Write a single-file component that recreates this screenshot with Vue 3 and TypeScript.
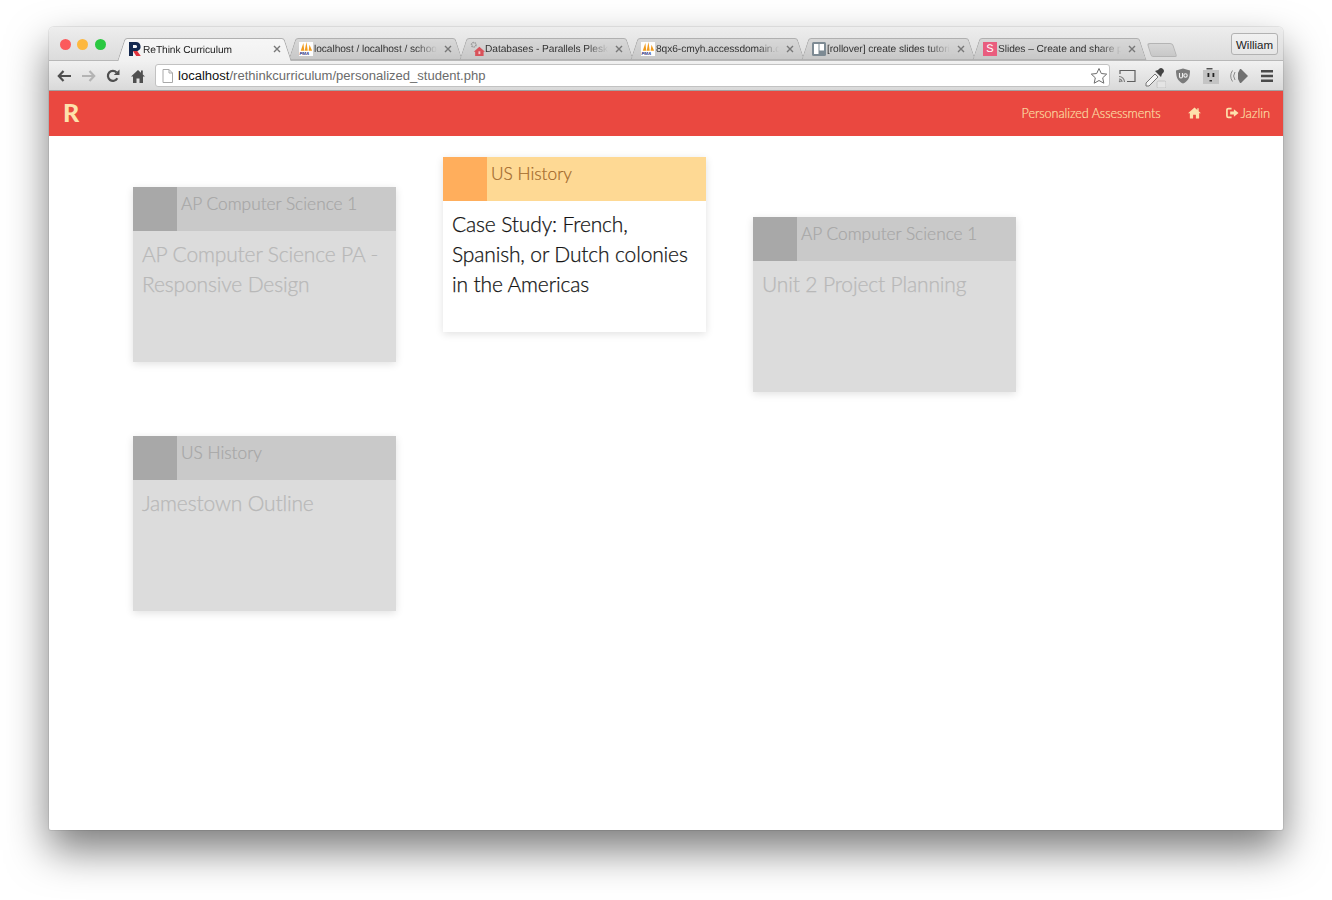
<script setup lang="ts">
interface Tab {
  title: string
  icon: 'rethink' | 'pma' | 'plesk' | 'trello' | 'slides'
  active?: boolean
}
interface Card {
  course: string
  title: string
  active?: boolean
}
interface Column {
  name: string
  cards: Card[]
}

const tabs: Tab[] = [
  { title: 'ReThink Curriculum', icon: 'rethink', active: true },
  { title: 'localhost / localhost / schoo', icon: 'pma' },
  { title: 'Databases - Parallels Plesk', icon: 'plesk' },
  { title: '8qx6-cmyh.accessdomain.c', icon: 'pma' },
  { title: '[rollover] create slides tutori', icon: 'trello' },
  { title: 'Slides – Create and share pr', icon: 'slides' },
]

const columns: Column[] = [
  {
    name: 'col-one',
    cards: [
      { course: 'AP Computer Science 1', title: 'AP Computer Science PA - Responsive Design' },
      { course: 'US History', title: 'Jamestown Outline' },
    ],
  },
  {
    name: 'col-two',
    cards: [
      { course: 'US History', title: 'Case Study: French, Spanish, or Dutch colonies in the Americas', active: true },
    ],
  },
  {
    name: 'col-three',
    cards: [{ course: 'AP Computer Science 1', title: 'Unit 2 Project Planning' }],
  },
]
</script>

<template>
  <div class="stage">
    <div class="window">
      <div class="titlebar">
        <div class="lights">
          <span class="light red"></span>
          <span class="light yellow"></span>
          <span class="light green"></span>
        </div>
        <div class="tabs">
          <div v-for="tab in tabs" :key="tab.title + tab.icon" class="tab" :class="{ active: tab.active }">
            <span class="favicon">
              <svg v-if="tab.icon === 'rethink'" viewBox="0 0 14 16" width="14" height="16">
                <path fill="#14284f" fill-rule="evenodd" d="M1 1h7a4.6 4.6 0 0 1 1.6 8.9L5 10v5H1zM5 4v3h2.6a1.5 1.5 0 0 0 0-3z" />
                <path fill="#e0323c" d="M5 10h4.2l3.6 5H8.200z" />
              </svg>
              <svg v-else-if="tab.icon === 'pma'" viewBox="0 0 16 16" width="14" height="14">
                <rect width="16" height="16" fill="#fdfdfd" />
                <path fill="#f29b1d" d="M2 10 5 1l1 9zM6.500 10 8.500 0l1.500 10zM11 10l1-7 3 7z" />
                <text x="0.500" y="14.500" class="pma-label">PMA</text>
              </svg>
              <svg v-else-if="tab.icon === 'plesk'" viewBox="0 0 16 16" width="15" height="15">
                <circle cx="4" cy="4" r="2.400" fill="none" stroke="#9a9a9a" stroke-width="1.600" stroke-dasharray="1.500 .7" />
                <path fill="#d8525a" d="M4 11.500 10 6l6 5.500h-1.500V16h-9v-4.500z" />
                <rect x="9" y="11" width="2" height="3" fill="#f3c3c5" />
              </svg>
              <svg v-else-if="tab.icon === 'trello'" viewBox="0 0 14 14" width="14" height="14">
                <rect width="14" height="14" rx="1.500" fill="#7d8a93" />
                <rect x="2" y="2" width="4.500" height="10" fill="#fff" />
                <rect x="7.500" y="2" width="4.500" height="6.500" fill="#fff" />
              </svg>
              <span v-else class="slides-icon">S</span>
            </span>
            <span class="tab-title">{{ tab.title }}</span>
            <svg class="tab-close" viewBox="0 0 8 8" width="8" height="8">
              <path d="M1 1l6 6M7 1 1 7" stroke="#777" stroke-width="1.400" fill="none" />
            </svg>
          </div>
          <div class="new-tab"></div>
        </div>
        <button class="profile" type="button">William</button>
      </div>

      <div class="toolbar">
        <div class="nav-buttons">
          <span class="tool">
            <svg viewBox="0 0 14 12" width="14" height="12"><path d="M6.500 1 1.800 6l4.700 5M2 6h12" fill="none" stroke="#4f4f4f" stroke-width="2.200" /></svg>
          </span>
          <span class="tool">
            <svg viewBox="0 0 14 12" width="14" height="12"><path d="M7.500 1 12.200 6l-4.700 5M12 6H0" fill="none" stroke="#b4b4b4" stroke-width="2.200" /></svg>
          </span>
          <span class="tool">
            <svg viewBox="0 0 14 14" width="14" height="14"><path d="M11.300 9.300A5 5 0 1 1 10.600 3.500" fill="none" stroke="#4f4f4f" stroke-width="2.200" /><path d="M7.800 6H13.500V.5z" fill="#4f4f4f" /></svg>
          </span>
          <span class="tool">
            <svg viewBox="0 0 14 14" width="14" height="14"><path fill="#4f4f4f" d="M7 1 0 7.500h2V14h3.500V9.500h3V14H12V7.500h2L11.800 5.400V1.500H10V3.700z" /></svg>
          </span>
        </div>
        <div class="omnibox">
          <svg class="page-icon" viewBox="0 0 11 14" width="11" height="14"><path d="M1 .5h6l3.500 3.500v9.500H1zM7 .5V4h3.500" fill="#fff" stroke="#a8a8a8" /></svg>
          <span class="url"><span class="host">localhost</span>/rethinkcurriculum/personalized_student.php</span>
          <svg class="star" viewBox="0 0 18 18" width="18" height="18"><path d="M9 1.500l2.300 5 5.400.6-4 3.700 1.100 5.400L9 13.500l-4.800 2.700 1.100-5.400-4-3.700 5.400-.6z" fill="#fff" stroke="#6d6d6d" /></svg>
        </div>
        <div class="extensions">
          <span class="ext">
            <svg viewBox="0 0 18 14" width="18" height="14"><path d="M2 5V1.500h15v11H9" fill="none" stroke="#5f5f5f" stroke-width="1.200" /><path d="M1 7.500A5.500 5.500 0 0 1 6.500 13M1 10a3 3 0 0 1 3 3" fill="none" stroke="#7a7a7a" stroke-width="1.100" /><circle cx="1.800" cy="12.200" r="1" fill="#7a7a7a" /></svg>
          </span>
          <span class="ext">
            <svg class="dropper" viewBox="0 0 22 22" width="22" height="22"><path d="M2 17 11 8l3 3-9 9H2z" fill="#f4f4f4" stroke="#777" /><path d="M11 5l6 6 1-3 1-1a2.500 2.500 0 0 0-4-4l-1 1z" fill="#444" /><rect x="13" y="15" width="9" height="7" rx="1.500" fill="#e4e4e4" stroke="#c4c4c4" /></svg>
          </span>
          <span class="ext">
            <svg viewBox="0 0 16 16" width="16" height="16"><path d="M8 .5 15 2.500c0 7-2 11-7 13-5-2-7-6-7-13z" fill="#7b7b7b" /><path d="M4.500 5v3.500a1.500 1.500 0 0 0 3 0V5" fill="none" stroke="#f1f1f1" stroke-width="1.100" /><circle cx="10.500" cy="7.500" r="1.700" fill="none" stroke="#f1f1f1" stroke-width="1.100" /></svg>
          </span>
          <span class="ext">
            <svg viewBox="0 0 16 16" width="16" height="16"><rect y="2" width="16" height="14" fill="#c4c4c4" /><rect x="3.500" y="0" width="6" height="1.500" fill="#555" /><rect x="4.500" y="5" width="1.800" height="4" fill="#222" /><rect x="9.500" y="5" width="1.800" height="4" fill="#222" /><rect x="6.500" y="12" width="2.500" height="1.500" fill="#333" /></svg>
          </span>
          <span class="ext">
            <svg viewBox="0 0 18 16" width="18" height="16"><path d="M8 5l2-4h1l7 7-7 7h-1l-2-4z" fill="#707070" /><path d="M5 4a7 7 0 0 0 0 8M2.500 2.500a10 10 0 0 0 0 11" fill="none" stroke="#8b8b8b" /></svg>
          </span>
          <span class="ext">
            <svg viewBox="0 0 12 12" width="12" height="12"><path d="M0 0h12v2.400H0zM0 4.800h12v2.400H0zM0 9.600h12V12H0z" fill="#4a4a4a" /></svg>
          </span>
        </div>
      </div>

      <header class="appbar">
        <span class="brand">R</span>
        <nav class="appnav">
          <a class="applink">Personalized Assessments</a>
          <svg class="home" viewBox="0 0 14 12" width="13" height="12"><path fill="#fde2ac" d="M7 0 0 6.200h2V12h3.500V8h3v4H12V6.200h2L11.500 4V.8H10v1.900z" /></svg>
          <a class="applink user">
            <svg viewBox="0 0 14 12" width="13" height="12"><path d="M6 1.200H2.500A1.500 1.500 0 0 0 1 2.700v6.600a1.500 1.500 0 0 0 1.500 1.500H6" fill="none" stroke="#fde2ac" stroke-width="1.800" /><path fill="#fde2ac" d="M4.500 4.500h4V2L13.500 6l-5 4V7.500h-4z" /></svg>
            Jazlin
          </a>
        </nav>
      </header>

      <main class="board">
        <div v-for="col in columns" :key="col.name" class="column" :class="col.name">
          <article v-for="card in col.cards" :key="card.title" class="card" :class="{ active: card.active }">
            <div class="card-head">
              <span class="swatch"></span>
              <span class="course">{{ card.course }}</span>
            </div>
            <h3 class="card-title">{{ card.title }}</h3>
          </article>
        </div>
      </main>
    </div>
  </div>
</template>

<style scoped>
.stage {
  width: 1332px;
  height: 900px;
  box-sizing: border-box;
  padding: 27px 49px 70px;
  background: #fff;
  overflow: hidden;
}
.window {
  height: 803px;
  display: flex;
  flex-direction: column;
  background: #fff;
  border-radius: 5px 5px 2px 2px;
  box-shadow: 0 0 0 1px rgba(0, 0, 0, 0.07), 0 20px 42px rgba(0, 0, 0, 0.52);
  font-family: "Liberation Sans", Arial, sans-serif;
}
.titlebar {
  position: relative;
  z-index: 1;
  height: 33px;
  flex: none;
  display: flex;
  background: linear-gradient(#ededed, #dcdcdc);
  border-radius: 5px 5px 0 0;
}
.lights {
  display: flex;
  gap: 6.500px;
  padding: 12px 0 0 10.500px;
}
.light {
  width: 11px;
  height: 11px;
  border-radius: 50%;
}
.red { background: #fb5a5c; }
.yellow { background: #fdb83f; }
.green { background: #2ac840; }
.tabs {
  display: flex;
  margin-left: 13.500px;
  flex: none;
}
.tab {
  position: relative;
  width: 171px;
  height: 21px;
  margin-top: 11px;
  display: flex;
  align-items: center;
  padding-left: 9px;
  box-sizing: border-box;
  font-size: 10.200px;
  letter-spacing: -0.06px;
  text-rendering: geometricPrecision;
  color: #333;
}
.tab::before,
.tab::after {
  content: "";
  position: absolute;
  top: 0;
  bottom: -1px;
  width: 55%;
  background: linear-gradient(#d8d8d8, #c8c8c8);
  border-top: 1px solid #b0b0b0;
  border-bottom: 1px solid #b2b2b2;
  box-sizing: border-box;
}
.tab::before {
  left: 2px;
  border-left: 1px solid #aaa;
  border-radius: 3px 0 0 0;
  transform: skewX(-18deg);
}
.tab::after {
  right: 2px;
  border-right: 1px solid #aaa;
  border-radius: 0 3px 0 0;
  transform: skewX(18deg);
}
.tab.active {
  height: 22px;
  z-index: 2;
  color: #222;
}
.tab.active::before,
.tab.active::after {
  background: linear-gradient(#f6f6f6, #f1f1f1);
  border-bottom: 0;
}
.favicon,
.tab-title,
.tab-close {
  position: relative;
  z-index: 1;
}
.favicon {
  width: 15px;
  flex: none;
  display: flex;
  align-items: center;
  justify-content: flex-start;
}
.pma-label {
  font: italic 700 5px "Liberation Sans", sans-serif;
  fill: #2c2f7f;
}
.slides-icon {
  width: 14px;
  height: 14px;
  background: #e95d7e;
  color: #fff;
  font: 400 11px/14px "Liberation Sans", sans-serif;
  text-align: center;
  flex: none;
}
.tab-title {
  width: 127px;
  padding-top: 2px;
  white-space: nowrap;
  overflow: hidden;
  -webkit-mask-image: linear-gradient(90deg, #000 80%, transparent 97%);
  mask-image: linear-gradient(90deg, #000 80%, transparent 97%);
}
.tab-close {
  margin-left: 3px;
  flex: none;
}
.new-tab {
  position: relative;
  width: 24px;
  height: 12px;
  margin: 16px 0 0 4px;
  background: linear-gradient(#d6d6d6, #c8c8c8);
  border: 1px solid #b4b4b4;
  border-radius: 3px 3px 2px 2px;
  transform: skewX(18deg);
}
.profile {
  margin: 6px 5px 0 auto;
  width: 47px;
  height: 22px;
  padding: 1px 0 0;
  background: linear-gradient(#f1f1f1, #e6e6e6);
  border: 1px solid #b2b2b2;
  border-radius: 3px;
  color: #222;
  font: 11.500px "Liberation Sans", sans-serif;
}
.toolbar {
  height: 31px;
  flex: none;
  display: flex;
  align-items: center;
  padding: 0 2px 0 3px;
  box-sizing: border-box;
  background: linear-gradient(#f1f1f1, #d9d9d9);
  border-top: 1px solid #b8b8b8;
  border-bottom: 1px solid #a2a2a2;
}
.nav-buttons,
.extensions {
  display: flex;
  flex: none;
}
.tool {
  width: 24.500px;
  height: 22px;
  display: flex;
  align-items: center;
  justify-content: center;
}
.omnibox {
  flex: 1;
  height: 23px;
  margin-left: 5px;
  display: flex;
  align-items: center;
  padding: 0 1px 0 6px;
  background: #fff;
  border: 1px solid #c2c2c2;
  border-radius: 3px;
  box-sizing: border-box;
  min-width: 0;
}
.url {
  margin-left: 5px;
  font-size: 13.050px;
  color: #6b6b6b;
  white-space: nowrap;
  flex: 1;
}
.host { color: #111; }
.star { flex: none; }
.extensions { margin-left: 3.500px; }
.ext {
  width: 28px;
  height: 24px;
  display: flex;
  align-items: center;
  justify-content: center;
}
.dropper { margin-top: 2px; }
.appbar {
  height: 45px;
  flex: none;
  display: flex;
  align-items: center;
  justify-content: space-between;
  padding: 0 13px 2px 14px;
  box-sizing: border-box;
  background: #ea4840;
  color: #fde2ac;
  font-family: Lato, "Liberation Sans", sans-serif;
}
.brand {
  font-size: 25px;
  font-weight: 900;
  line-height: 1;
}
.appnav {
  display: flex;
  align-items: center;
  font-size: 12.700px;
  font-weight: 300;
  letter-spacing: -0.1px;
  -webkit-text-stroke: 0.15px currentColor;
}
.applink {
  display: flex;
  align-items: center;
  gap: 2px;
  white-space: nowrap;
}
.user { font-size: 13px; }
.home { margin: 0 25px 0 27px; }
.board {
  flex: 1;
  display: flex;
  gap: 47px;
  padding-left: 84px;
  font-family: Lato, "Liberation Sans", sans-serif;
}
.column {
  width: 263px;
  display: flex;
  flex-direction: column;
  gap: 74px;
}
.col-one { margin-top: 51px; }
.col-two { margin-top: 21px; }
.col-three { margin-top: 81px; }
.card {
  height: 175px;
  background: #dcdcdc;
  box-shadow: 0 2px 8px rgba(0, 0, 0, 0.12);
  color: #b8b8b8;
  font-weight: 300;
}
.card-head {
  height: 44px;
  display: flex;
  background: #c9c9c9;
}
.swatch {
  width: 44px;
  background: #a8a8a8;
}
.course {
  padding: 4px 0 0 4px;
  font-size: 17.300px;
  line-height: 25px;
  color: #a6a6a6;
  -webkit-text-stroke: 0.2px currentColor;
}
.card-title {
  margin: 0;
  padding: 8px 9px 0;
  font-size: 21px;
  line-height: 30px;
  font-weight: 300;
  letter-spacing: -0.15px;
  -webkit-text-stroke: 0.25px currentColor;
}
.card.active {
  background: #fff;
  color: #141414;
}
.card.active .card-head { background: #fed994; }
.card.active .swatch { background: #ffae5c; }
.card.active .course { color: #a1672b; }
</style>
